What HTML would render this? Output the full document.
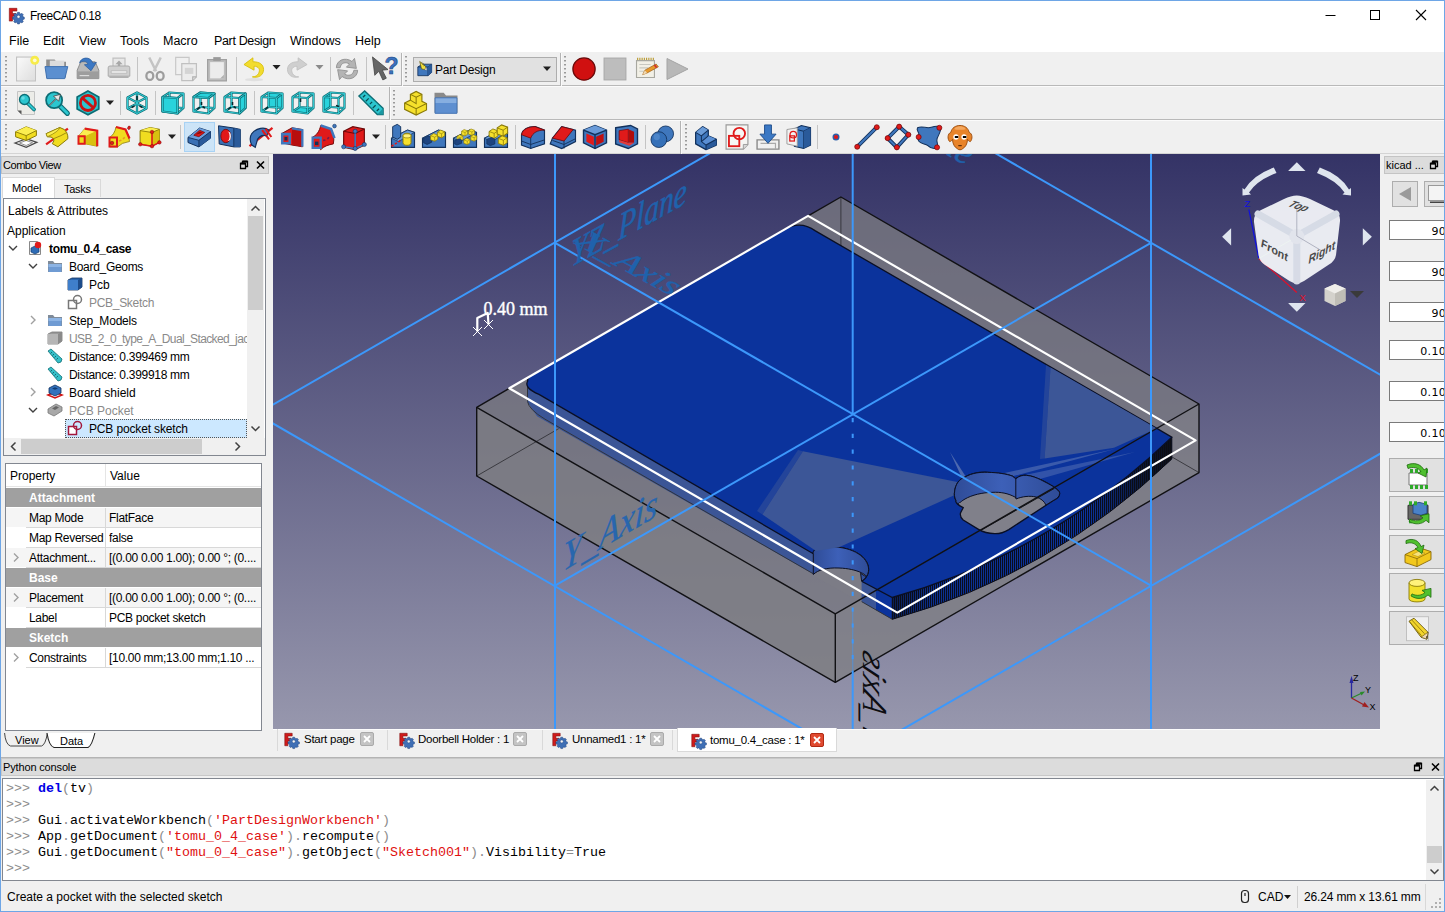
<!DOCTYPE html>
<html><head><meta charset="utf-8"><title>FreeCAD 0.18</title>
<style>
*{box-sizing:border-box;margin:0;padding:0}
html,body{width:1445px;height:912px;overflow:hidden}
body{position:relative;background:#f0f0f0;font-family:"Liberation Sans",sans-serif;font-size:12px;color:#000}
.abs{position:absolute}
.t{position:absolute;white-space:nowrap;line-height:16px}
#titlebar{left:1px;top:1px;width:1443px;height:30px;background:#fff}
#menubar{left:1px;top:31px;width:1443px;height:21px;background:#fff}
.menu{font-size:12.5px;top:33px}
.hl{position:absolute;height:1px;left:1px;width:1443px}
.grip{position:absolute;width:3px;border-left:1px dotted #999;border-right:1px dotted #bbb}
.sep{position:absolute;width:1px;background:#b8b8b8}
svg{position:absolute;overflow:visible}
</style></head>
<body>
<!-- window frame -->
<div class="abs" style="left:0;top:0;width:1445px;height:912px;border:1px solid #6ea6e6;z-index:50;pointer-events:none"></div>
<div class="abs" id="titlebar"></div>
<div class="abs" id="menubar"></div>
<svg style="left:0;top:0" width="1445" height="31"><g transform="translate(8.5,7.5) scale(0.8)"><path d="M1,1h9.500v3.500h-5.500v3h4v3.300h-4v6.200h-4z" fill="#d01b1b" stroke="#7a0c0c" stroke-width=".7"/><g transform="translate(12.500,11.500)"><path d="M-1.200,-5.500h2.400l.4,1.500l1.300,.6l1.400,-.8l1.700,1.700l-.8,1.400l.6,1.300l1.500,.4v2.400l-1.500,.4l-.6,1.300l.8,1.400l-1.700,1.700l-1.400,-.8l-1.300,.6l-.4,1.500h-2.400l-.4,-1.500l-1.300,-.6l-1.400,.8l-1.700,-1.700l.8,-1.400l-.6,-1.300l-1.500,-.4v-2.400l1.500,-.4l.6,-1.300l-.8,-1.400l1.700,-1.700l1.400,.8l1.300,-.6z" fill="#3f6fb5" stroke="#1d3f78" stroke-width=".6"/><circle r="1.900" fill="#f4f4f4" stroke="#1d3f78" stroke-width=".5"/></g></g><path d="M1325.500,15.500h10" stroke="#000"/><rect x="1370.500" y="10.500" width="9" height="9" fill="none" stroke="#000"/><path d="M1416,10l10,10m0,-10l-10,10" stroke="#000" stroke-width="1.100"/></svg>
<div class="t" style="left:30px;top:8px;font-size:12px;letter-spacing:-.5px">FreeCAD 0.18</div>
<!-- MENU -->
<div class="t menu" style="left:9px">File</div>
<div class="t menu" style="left:43px">Edit</div>
<div class="t menu" style="left:79px">View</div>
<div class="t menu" style="left:120px">Tools</div>
<div class="t menu" style="left:163px">Macro</div>
<div class="t menu" style="left:214px;letter-spacing:-.35px">Part Design</div>
<div class="t menu" style="left:290px">Windows</div>
<div class="t menu" style="left:355px">Help</div>
<!-- toolbar separators -->
<div class="hl" style="top:85px;background:#b9b9b9"></div>
<div class="hl" style="top:86px;background:#fbfbfb"></div>
<div class="hl" style="top:119px;background:#b9b9b9"></div>
<div class="hl" style="top:120px;background:#fbfbfb"></div>
<div class="hl" style="top:153px;background:#d4d4d4"></div>
<svg style="left:0;top:52px" width="1445" height="102"><defs><linearGradient id="pg" x1="0" y1="0" x2="1" y2="1"><stop offset="0" stop-color="#fafafa"/><stop offset="1" stop-color="#dedede"/></linearGradient></defs><path d="M6,4v27" stroke="#9a9a9a" stroke-width="2" stroke-dasharray="1.5 2.5"/><g transform="translate(11.0,2.0) scale(1.25)"><path d="M4.5,2.500h15v19h-15z" fill="#efefef" stroke="#c2c2c2"/><path d="M5,3h14v18h-14z" fill="url(#pg)"/><circle cx="19" cy="5" r="3.6" fill="#f7ec4a"/><circle cx="19" cy="5" r="1.5" fill="#fffbd0"/></g><g transform="translate(42.6,2.6) scale(1.2)"><path d="M3,4h7l1.5,2h8v13h-16.500z" fill="#8f8f8f"/><path d="M6,5h12v12h-12z" fill="#dcdcdc"/><path d="M2,10h19l-2.5,10h-15z" fill="#5b8fd0" stroke="#3d6fb0" stroke-width=".8"/></g><g transform="translate(73.6,2.6) scale(1.2)"><path d="M3,13l3,-7h12l3,7v7h-18z" fill="#b9b9b9" stroke="#8a8a8a" stroke-width=".8"/><path d="M3,14h18v6h-18z" fill="#9d9d9d"/><path d="M5,17.500h8" stroke="#dcdcdc"/><path d="M5,7c1,-5 9,-6 11,0l3,-0.500l-4.5,7l-5.5,-5l3,-0.500c-1,-3 -5,-3 -7,-1z" fill="#3b78c4" stroke="#2a5a9a" stroke-width=".6"/></g><g transform="translate(104.6,2.6) scale(1.2)"><path d="M7,3h10v8h-10z" fill="#e8e8e8" stroke="#c0c0c0"/><path d="M12,5l3,3h-2v2h-2v-2h-2z" fill="#a8a8a8"/><path d="M3,11q0,-1.5 1.5,-1.500h15q1.5,0 1.5,1.500v7h-18z" fill="#d0d0d0" stroke="#a8a8a8" stroke-width=".8"/><path d="M5.5,13.500h13v2h-13z" fill="#f4f4f4" stroke="#b0b0b0" stroke-width=".6"/><path d="M4,18h16v1.500h-16z" fill="#b0b0b0"/></g><g transform="translate(141.2,3.2) scale(1.15)"><path d="M7,2l6,12M17,2l-6,12" stroke="#c4c4c4" stroke-width="2.2"/><ellipse cx="7.5" cy="18" rx="3" ry="3.5" fill="none" stroke="#9d9d9d" stroke-width="2"/><ellipse cx="16.5" cy="18" rx="3" ry="3.5" fill="none" stroke="#9d9d9d" stroke-width="2"/></g><g transform="translate(171.4,2.4) scale(1.22)"><path d="M3.5,2.500h11v14h-11z" fill="#f0f0f0" stroke="#c8c8c8"/><path d="M8.5,7.500h12v11l-3,3h-9z" fill="#ececec" stroke="#c0c0c0"/><path d="M11,11h7v5h-7z" fill="#d4d4d4"/><path d="M17.5,21.500v-3h3" fill="none" stroke="#b0b0b0"/></g><g transform="translate(202.0,2.0) scale(1.25)"><path d="M4.5,4.500h15v17h-15z" fill="#bdbdbd" stroke="#a0a0a0"/><path d="M6.5,6.500h11v13h-11z" fill="#ececec"/><path d="M9,2.500h6v3h-6z" fill="#9a9a9a"/><path d="M17.5,19.500l-3,0l3,-3z" fill="#b0b0b0"/></g><g transform="translate(240.6,3.6) scale(1.12)"><path d="M11,2l-8,6l9,5v-3.500c4,0 6,3 4,6.500c-1,2 -3,3 -5.5,3c6,1.5 10,-2 10,-6.500c0,-4.5 -3.5,-7 -9.5,-7z" fill="#f2dc2e" stroke="#d8bf10" stroke-width=".8"/><ellipse cx="12" cy="21.5" rx="8" ry="1.5" fill="#d8d8d8" opacity=".7"/></g><g transform="translate(283.6,3.6) scale(1.12)"><path d="M13,2l8,6l-9,5v-3.500c-4,0 -6,3 -4,6.500c1,2 3,3 5.5,3c-6,1.5 -10,-2 -10,-6.500c0,-4.5 3.5,-7 9.5,-7z" fill="#cfcfcf" stroke="#c0c0c0" stroke-width=".8"/></g><g transform="translate(332.0,2.0) scale(1.25)"><path d="M3.5,11c0,-6 7,-9 12.5,-5l2,-2.500l1.5,8l-8,-1l2.5,-2.500c-3,-2 -7,-1 -7.5,3z" fill="#b4b4b4" stroke="#8f8f8f" stroke-width=".7"/><path d="M20.5,13c0,6 -7,9 -12.5,5l-2,2.500l-1.5,-8l8,1l-2.5,2.500c3,2 7,1 7.5,-3z" fill="#b4b4b4" stroke="#8f8f8f" stroke-width=".7"/></g><g transform="translate(370.2,3.2) scale(1.15)"><path d="M2,1.500l2,16l3.5,-3.500l3.5,7.500l3,-1.500l-3.5,-7l5,-0.500z" fill="#666" stroke="#444" stroke-width=".7"/><text x="12.5" y="16.5" font-family="Liberation Sans,sans-serif" font-size="20" font-weight="bold" fill="#3a72c0" stroke="#1d3f78" stroke-width=".5">?</text></g><path d="M137.5,5v24" stroke="#c4c4c4"/><path d="M236.5,5v24" stroke="#c4c4c4"/><path d="M330.5,5v24" stroke="#c4c4c4"/><path d="M366.5,5v24" stroke="#c4c4c4"/><path d="M272.5,13.0h8l-4,4.500z" fill="#202020"/><path d="M315.5,13.0h8l-4,4.500z" fill="#8a8a8a"/><path d="M401.5,1v33" stroke="#b4b4b4"/><path d="M402.5,1v33" stroke="#fafafa"/><path d="M406,4v27" stroke="#9a9a9a" stroke-width="2" stroke-dasharray="1.5 2.5"/><rect x="413.5" y="5.5" width="143" height="24" fill="#e1e1e1" stroke="#adadad"/><g transform="translate(416,8.5) scale(.92)"><path d="M2,7l5,-3h10v9l-4,3.500h-11z" fill="#3f77bd" stroke="#12315c" stroke-width=".9"/><path d="M2,7h11v9.500M13,7l4,-3" fill="none" stroke="#12315c" stroke-width=".8"/><path d="M13,7l4,-3v9l-4,3.500z" fill="#2a5a9a"/><path d="M4,1l7,6l-1.5,3l-3.5,-1z" fill="#f2e040" stroke="#5a5008" stroke-width=".7"/><path d="M5,3l2,-1M6.5,4.500l2,-1.500M8,6l2,-1.5" stroke="#5a5008" stroke-width=".6"/><path d="M9.5,10l1.5,-3l1,3.500z" fill="#fff" stroke="#555" stroke-width=".4"/></g><text x="435" y="21.5" font-family="Liberation Sans,sans-serif" font-size="12" letter-spacing="-.2">Part Design</text><path d="M543,14.5h8l-4,4.500z" fill="#202020"/><path d="M560.5,1v33" stroke="#b4b4b4"/><path d="M561.5,1v33" stroke="#fafafa"/><path d="M565,4v27" stroke="#9a9a9a" stroke-width="2" stroke-dasharray="1.5 2.5"/><g transform="translate(571.3,4.3) scale(1.06)"><circle cx="12" cy="12" r="10.5" fill="#d01010" stroke="#6a0a0a" stroke-width="1.2"/></g><g transform="translate(602.5,4.5) scale(1.04)"><rect x="1.5" y="1.5" width="21" height="21" fill="#bdbdbd" stroke="#a8a8a8"/></g><g transform="translate(632.6,3.6) scale(1.12)"><path d="M3.5,4.500h16v15h-16z" fill="#f2f0e6" stroke="#a8a8a0"/><path d="M4,3h15" stroke="#b89a30" stroke-width="2" stroke-dasharray="1 1"/><path d="M6,8h10M6,11h8M6,14h6" stroke="#c8c8c0"/><path d="M9,17l2,-4l10,-5.500l2,2.500l-10,5.500z" fill="#e89a2c" stroke="#9a5a10" stroke-width=".6"/><path d="M9,17l2,-4l2,2.500z" fill="#f0d8b0"/><path d="M19.5,8.300l2,2.5" stroke="#d03030" stroke-width="1.5"/></g><g transform="translate(665.0,5.0) scale(1.0)"><path d="M2,1.500l21,10.500l-21,10.500z" fill="#b8b8b8" stroke="#a4a4a4"/></g><path d="M6,38v27" stroke="#9a9a9a" stroke-width="2" stroke-dasharray="1.5 2.5"/><g transform="translate(14.0,39.0) scale(1.0)"><path d="M3.5,.5h17v23h-13l-4,-4z" fill="#ecece8" stroke="#c4c4c4"/><path d="M3.5,19.500h4v4z" fill="#555"/><path d="M13.5,12l6.5,6.5" stroke="#0d6d75" stroke-width="3.8" stroke-linecap="round"/><path d="M13.5,12l6.5,6.5" stroke="#2cc6cf" stroke-width="2" stroke-linecap="round"/><circle cx="10.5" cy="8.5" r="5" fill="#2cc6cf" stroke="#0d6d75" stroke-width="1.3"/><circle cx="9" cy="7" r="1.8" fill="#7fe4ea" opacity=".7"/></g><g transform="translate(43.2,37.2) scale(1.15)"><path d="M14,14l7,7" stroke="#0d6d75" stroke-width="4.5" stroke-linecap="round"/><path d="M14,14l7,7" stroke="#2cc6cf" stroke-width="2.5" stroke-linecap="round"/><circle cx="9.5" cy="9.5" r="7" fill="#2cc6cf" stroke="#0d6d75" stroke-width="1.5"/><path d="M5,14l6,-6l-2,-2l6,-1.500l-1.5,6l-2,-2l-6,6z" fill="#e8e8e8" stroke="#444" stroke-width=".7"/></g><g transform="translate(75.0,38.0) scale(1.08)"><polygon points="12,1 22,6.5 22,17.5 12,23 2,17.5 2,6.5" fill="#2cc6cf" stroke="#0d6d75" stroke-width="1.6"/><circle cx="12" cy="12" r="7" fill="none" stroke="#c81414" stroke-width="2.6"/><path d="M7,7.500l10,9" stroke="#c81414" stroke-width="2.6"/></g><g transform="translate(125.0,39.0) scale(1.0)"><g fill="none" stroke="#0d6d75" stroke-width="2.3" stroke-linejoin="round"><polygon points="12,1.5 21.5,6.5 21.5,17.5 12,22.5 2.5,17.5 2.5,6.5"/><path d="M12,1.5v11l-9.5,5M12,12.500l9.5,5M2.5,6.500l9.5,5l9.5,-5M12,11.500v11"/></g><g fill="none" stroke="#35d0d8" stroke-width="1" stroke-linejoin="round"><polygon points="12,1.5 21.5,6.5 21.5,17.5 12,22.5 2.5,17.5 2.5,6.5"/><path d="M12,1.5v11l-9.5,5M12,12.500l9.5,5M2.5,6.500l9.5,5l9.5,-5M12,11.500v11"/></g><path d="M12,5v4M6.5,16.500l3,-1.500M17.5,16.500l-3,-1.5" stroke="#06282c" stroke-width="1.6"/></g><g transform="translate(161.0,39.0) scale(1.0)"><g fill="none" stroke="#0d6d75" stroke-width="2.2" stroke-linejoin="round"><polygon points="1.5,6 16.5,7 16.5,22.5 1.5,20.5"/><polygon points="8.5,1.5 22.5,2.5 22.5,17 8.5,16"/><path d="M1.5,6L8.5,1.5"/><path d="M16.5,7L22.5,2.5"/><path d="M16.5,22.5L22.5,17"/><path d="M1.5,20.5L8.5,16"/></g><g fill="none" stroke="#35d0d8" stroke-width=".9" stroke-linejoin="round"><polygon points="1.5,6 16.5,7 16.5,22.5 1.5,20.5"/><polygon points="8.5,1.5 22.5,2.5 22.5,17 8.5,16"/><path d="M1.5,6L8.5,1.5"/><path d="M16.5,7L22.5,2.5"/><path d="M16.5,22.5L22.5,17"/><path d="M1.5,20.5L8.5,16"/></g><polygon points="1.5,6 16.5,7 16.5,22.5 1.5,20.5" fill="#29d3dc"/><g fill="none" stroke="#0d6d75" stroke-width="2.2" stroke-linejoin="round"><polygon points="1.5,6 16.5,7 16.5,22.5 1.5,20.5"/></g><g fill="none" stroke="#35d0d8" stroke-width=".9" stroke-linejoin="round"><polygon points="1.5,6 16.5,7 16.5,22.5 1.5,20.5"/></g></g><g transform="translate(192.0,39.0) scale(1.0)"><g fill="none" stroke="#0d6d75" stroke-width="2.2" stroke-linejoin="round"><polygon points="1.5,6 16.5,7 16.5,22.5 1.5,20.5"/><polygon points="8.5,1.5 22.5,2.5 22.5,17 8.5,16"/><path d="M1.5,6L8.5,1.5"/><path d="M16.5,7L22.5,2.5"/><path d="M16.5,22.5L22.5,17"/><path d="M1.5,20.5L8.5,16"/></g><g fill="none" stroke="#35d0d8" stroke-width=".9" stroke-linejoin="round"><polygon points="1.5,6 16.5,7 16.5,22.5 1.5,20.5"/><polygon points="8.5,1.5 22.5,2.5 22.5,17 8.5,16"/><path d="M1.5,6L8.5,1.5"/><path d="M16.5,7L22.5,2.5"/><path d="M16.5,22.5L22.5,17"/><path d="M1.5,20.5L8.5,16"/></g><path d="M9.5,14v-3M5,18.500l3,-2.500M13,17l-2.5,-1.5" stroke="#06282c" stroke-width="1.6"/><path d="M9.5,14l-2,2" stroke="#29d3dc" stroke-width="1"/><polygon points="1.5,6 16.5,7 22.5,2.5 8.5,1.5" fill="#29d3dc"/><g fill="none" stroke="#0d6d75" stroke-width="2.2" stroke-linejoin="round"><polygon points="1.5,6 16.5,7 22.5,2.5 8.5,1.5"/></g><g fill="none" stroke="#35d0d8" stroke-width=".9" stroke-linejoin="round"><polygon points="1.5,6 16.5,7 22.5,2.5 8.5,1.5"/></g></g><g transform="translate(223.0,39.0) scale(1.0)"><g fill="none" stroke="#0d6d75" stroke-width="2.2" stroke-linejoin="round"><polygon points="1.5,6 16.5,7 16.5,22.5 1.5,20.5"/><polygon points="8.5,1.5 22.5,2.5 22.5,17 8.5,16"/><path d="M1.5,6L8.5,1.5"/><path d="M16.5,7L22.5,2.5"/><path d="M16.5,22.5L22.5,17"/><path d="M1.5,20.5L8.5,16"/></g><g fill="none" stroke="#35d0d8" stroke-width=".9" stroke-linejoin="round"><polygon points="1.5,6 16.5,7 16.5,22.5 1.5,20.5"/><polygon points="8.5,1.5 22.5,2.5 22.5,17 8.5,16"/><path d="M1.5,6L8.5,1.5"/><path d="M16.5,7L22.5,2.5"/><path d="M16.5,22.5L22.5,17"/><path d="M1.5,20.5L8.5,16"/></g><path d="M9.5,14v-3M5,18.500l3,-2.500M13,17l-2.5,-1.5" stroke="#06282c" stroke-width="1.6"/><path d="M9.5,14l-2,2" stroke="#29d3dc" stroke-width="1"/><polygon points="16.5,7 22.5,2.5 22.5,17 16.5,22.5" fill="#29d3dc"/><g fill="none" stroke="#0d6d75" stroke-width="2.2" stroke-linejoin="round"><polygon points="16.5,7 22.5,2.5 22.5,17 16.5,22.5"/></g><g fill="none" stroke="#35d0d8" stroke-width=".9" stroke-linejoin="round"><polygon points="16.5,7 22.5,2.5 22.5,17 16.5,22.5"/></g></g><g transform="translate(260.0,39.0) scale(1.0)"><polygon points="8.5,1.5 22.5,2.5 22.5,17 8.5,16" fill="#29d3dc"/><g fill="none" stroke="#0d6d75" stroke-width="2.2" stroke-linejoin="round"><polygon points="1.5,6 16.5,7 16.5,22.5 1.5,20.5"/><polygon points="8.5,1.5 22.5,2.5 22.5,17 8.5,16"/><path d="M1.5,6L8.5,1.5"/><path d="M16.5,7L22.5,2.5"/><path d="M16.5,22.5L22.5,17"/><path d="M1.5,20.5L8.5,16"/></g><g fill="none" stroke="#35d0d8" stroke-width=".9" stroke-linejoin="round"><polygon points="1.5,6 16.5,7 16.5,22.5 1.5,20.5"/><polygon points="8.5,1.5 22.5,2.5 22.5,17 8.5,16"/><path d="M1.5,6L8.5,1.5"/><path d="M16.5,7L22.5,2.5"/><path d="M16.5,22.5L22.5,17"/><path d="M1.5,20.5L8.5,16"/></g><path d="M5,18.500l3,-2.5" stroke="#06282c" stroke-width="1.6"/></g><g transform="translate(291.0,39.0) scale(1.0)"><polygon points="1.5,20.5 16.5,22.5 22.5,17 8.5,16" fill="#29d3dc"/><g fill="none" stroke="#0d6d75" stroke-width="2.2" stroke-linejoin="round"><polygon points="1.5,6 16.5,7 16.5,22.5 1.5,20.5"/><polygon points="8.5,1.5 22.5,2.5 22.5,17 8.5,16"/><path d="M1.5,6L8.5,1.5"/><path d="M16.5,7L22.5,2.5"/><path d="M16.5,22.5L22.5,17"/><path d="M1.5,20.5L8.5,16"/></g><g fill="none" stroke="#35d0d8" stroke-width=".9" stroke-linejoin="round"><polygon points="1.5,6 16.5,7 16.5,22.5 1.5,20.5"/><polygon points="8.5,1.5 22.5,2.5 22.5,17 8.5,16"/><path d="M1.5,6L8.5,1.5"/><path d="M16.5,7L22.5,2.5"/><path d="M16.5,22.5L22.5,17"/><path d="M1.5,20.5L8.5,16"/></g><path d="M9.5,11v-3.5" stroke="#06282c" stroke-width="1.6"/></g><g transform="translate(322.0,39.0) scale(1.0)"><polygon points="1.5,6 8.5,1.5 8.5,16 1.5,20.5" fill="#29d3dc"/><g fill="none" stroke="#0d6d75" stroke-width="2.2" stroke-linejoin="round"><polygon points="1.5,6 16.5,7 16.5,22.5 1.5,20.5"/><polygon points="8.5,1.5 22.5,2.5 22.5,17 8.5,16"/><path d="M1.5,6L8.5,1.5"/><path d="M16.5,7L22.5,2.5"/><path d="M16.5,22.5L22.5,17"/><path d="M1.5,20.5L8.5,16"/></g><g fill="none" stroke="#35d0d8" stroke-width=".9" stroke-linejoin="round"><polygon points="1.5,6 16.5,7 16.5,22.5 1.5,20.5"/><polygon points="8.5,1.5 22.5,2.5 22.5,17 8.5,16"/><path d="M1.5,6L8.5,1.5"/><path d="M16.5,7L22.5,2.5"/><path d="M16.5,22.5L22.5,17"/><path d="M1.5,20.5L8.5,16"/></g><path d="M14,14.500l3,1" stroke="#06282c" stroke-width="1.6"/></g><g transform="translate(357.2,37.2) scale(1.15)"><path d="M1.5,6l5,-4.500l16,15v5.500l-5,0z" fill="#2cc6cf" stroke="#0d6d75" stroke-width="1.2"/><path d="M7,5l-2,2M10,8l-2.5,2.500M13,11l-2,2M16,14l-2.5,2.500M19,17l-2,2" stroke="#0a4a52" stroke-width="1.1"/><path d="M17.5,22l5,-0v-5.5" fill="#1a98a2"/></g><g transform="translate(401.2,37.2) scale(1.15)"><path d="M3,12l5,-2.500v-5l5,-2.500l5,2.500v6l4,2v5.500l-9,4.500l-10,-5z" fill="#f5e02c" stroke="#8a7a08" stroke-width="1"/><path d="M3,12l10,5l9,-4.500M13,17v5.500M8,4.500l5,2.500l5,-2.500M13,7v5.500l-5,-3" fill="none" stroke="#8a7a08" stroke-width=".9"/></g><g transform="translate(432.2,37.2) scale(1.15)"><path d="M2,3h8l2,2.500h10v15h-20z" fill="#8a8a8a"/><path d="M2.5,7.500h19v13.500h-19z" fill="#5e8fd0" stroke="#4474b4" stroke-width=".8"/><path d="M3,8h18v4h-18z" fill="#86aee0"/></g><path d="M106,48.5h8l-4,4.500z" fill="#202020"/><path d="M120.5,39v24" stroke="#c4c4c4"/><path d="M155.5,39v24" stroke="#c4c4c4"/><path d="M254.5,39v24" stroke="#c4c4c4"/><path d="M353.5,39v24" stroke="#c4c4c4"/><path d="M389.5,35v33" stroke="#b4b4b4"/><path d="M390.5,35v33" stroke="#fafafa"/><path d="M394,38v27" stroke="#9a9a9a" stroke-width="2" stroke-dasharray="1.5 2.5"/><path d="M6,72v27" stroke="#9a9a9a" stroke-width="2" stroke-dasharray="1.5 2.5"/><rect x="184.5" y="70.5" width="30" height="29" fill="#cce4f7" stroke="#a8d2f4"/><g transform="translate(14.0,73.0) scale(1.0)"><path d="M1,18l11.2,-4.300l10.6,3.700l-10.6,5z" fill="#f4f4f4" stroke="#4a4a4a" stroke-width="1.3"/><path d="M5.5,18l6.7,-2.500l6.3,2.200l-6.3,2.800z" fill="#fff" stroke="#777" stroke-width=".8"/><path d="M1.6,6.800l10.6,-5l10.2,3.800v5l-10.2,4.900l-10.6,-3.700z" fill="#f0dc20" stroke="#8a7a08" stroke-width="1"/><path d="M1.6,6.800l10.6,-5l10.2,3.800l-10.2,5z" fill="#fbee50"/><path d="M1.6,6.800l10.6,3.800l10.2,-5M12.2,10.600v4.9" fill="none" stroke="#8a7a08" stroke-width=".9"/></g><g transform="translate(45.0,73.0) scale(1.0)"><path d="M1.1,19.300l21.8,-15.6" stroke="#e01a1a" stroke-width="2.2"/><path d="M1.1,8.700l13.7,-6.200q5.5,1.5 6.9,5q1.5,3.5 1.2,6.200l-10,8.100l-5.6,-3.100q2.5,-3 1.3,-5q-2,-2.3 -6.2,-1.900z" fill="#f0dc20" stroke="#8a7a08" stroke-width="1"/><path d="M1.1,8.700l13.7,-6.200q-1,4 -12.4,9.300z" fill="#fbee50" stroke="#8a7a08" stroke-width=".7"/><path d="M8.6,13.700q8,-3 13.1,-6.2" fill="none" stroke="#8a7a08" stroke-width=".8"/></g><g transform="translate(76.0,73.0) scale(1.0)"><path d="M2.5,11.200l6.2,-7.500l12.5,1.900v15.600l-12.5,-2.500l-6.2,0z" fill="#f0dc20" stroke="#8a7a08" stroke-width=".8"/><path d="M8.7,11.200l12.5,-5.600v15.600l-12.5,-2.500z" fill="#d8c010"/><path d="M2.5,11.200l6.2,-7.500l12.5,1.900l-12.5,5.600z" fill="#fbee50"/><path d="M8.7,3.700l12.5,1.900v15.6" fill="none" stroke="#e01a1a" stroke-width="2.2"/><path d="M2.5,11.200h6.200v7.500h-6.200z" fill="#f0dc20" stroke="#e01a1a" stroke-width="2"/></g><g transform="translate(107.0,73.0) scale(1.0)"><path d="M2.5,12.500q5,-3 6.5,-10.500l9.5,2.500q4,6 4,12q-8,1 -12,5.500h-8z" fill="#f0dc20" stroke="#8a7a08" stroke-width=".8"/><path d="M9,2l9.5,2.500l4,9" fill="none" stroke="#e01a1a" stroke-width="2.2"/><path d="M2.5,12.500h7.500v9h-7.500z" fill="#f0dc20" stroke="#e01a1a" stroke-width="2"/><circle cx="5" cy="18" r="1.8" fill="#e01a1a" stroke="#6e0808" stroke-width=".5"/><ellipse cx="22" cy="2.8" rx="1.3" ry="1.8" fill="#e01a1a" stroke="#6e0808" stroke-width=".5" transform="rotate(20 22 2.8)"/><path d="M12,16q4,-1 6.5,-5" fill="none" stroke="#e89820" stroke-width="1.6" stroke-dasharray="2.5 2"/></g><g transform="translate(138.0,73.0) scale(1.0)"><path d="M2.1,5.600l10,-3.100l9.3,1.800v13.100l-7.4,3.800l-11.9,-1.900z" fill="#f0dc20" stroke="#8a7a08" stroke-width="1"/><path d="M2.1,5.600l10,-3.100l9.3,1.800l-7.4,3.200z" fill="#fbee50"/><path d="M14,7.500l7.4,-3.200v13.100l-7.4,3.800z" fill="#d8c010"/><path d="M2.1,5.600l11.9,1.900l7.4,-3.2" fill="none" stroke="#8a7a08" stroke-width=".9"/><path d="M14,7v14.200l7.4,-3.800M14,21.200l-11.9,-1.9" fill="none" stroke="#e01a1a" stroke-width="1.6"/><g fill="#e01a1a" stroke="#6e0808" stroke-width=".4"><circle cx="14" cy="7" r="1.8"/><circle cx="14" cy="21.2" r="1.8"/><circle cx="2.3" cy="19.3" r="1.8"/><circle cx="21.4" cy="17.4" r="1.8"/></g></g><g transform="translate(187.0,73.0) scale(1.0)"><path d="M1,12.400l11.6,-9.400l10.9,3.600v6.600l-11.6,8.700l-10.9,-4.400z" fill="#3a70b4" stroke="#12315c" stroke-width="1"/><path d="M1,12.400l11.6,-9.400l10.9,3.600l-11.6,8.700z" fill="#6a9edc"/><path d="M11.9,15.300l11.6,-8.700v6.600l-11.6,8.700z" fill="#2a5a9a"/><path d="M1,12.400l10.9,2.900l11.6,-8.700M11.9,15.300v6.6" fill="none" stroke="#12315c" stroke-width=".9"/><path d="M6.8,10.300l5.8,-5.100l5.1,2.200l-5.8,4.300z" fill="#e01818" stroke="#6e0808" stroke-width=".7"/><path d="M8.8,9.800l3.8,-3.200l3,1.200z" fill="#8a0a0a"/></g><g transform="translate(218.0,73.0) scale(1.0)"><path d="M.5,.8l15.3,2.200l6.5,1.400v17.500h-6.500l-14.6,-2.900z" fill="#3a70b4" stroke="#12315c" stroke-width="1"/><path d="M15.8,3l6.5,1.400v17.500h-6.500z" fill="#2a5a9a"/><path d="M15.8,3v18.9" stroke="#12315c" stroke-width=".9"/><ellipse cx="7.8" cy="11" rx="5" ry="6.7" fill="#e01818" stroke="#6e0808" stroke-width=".8"/><ellipse cx="10.3" cy="11.3" rx="2.6" ry="4.6" fill="#f6f6f6"/><ellipse cx="9" cy="11.2" rx="2.5" ry="4.8" fill="#e01818"/></g><g transform="translate(247.2,71.2) scale(1.15)"><path d="M2,20l20,-16" stroke="#e01a1a" stroke-width="2"/><path d="M4,9c4,-5 11,-6 15,-3l-2,5c-3,-1 -6,0 -8,3l-2,7l-3,-2c-2,-4 -2,-7 0,-10z" fill="#3f77bd" stroke="#12315c" stroke-width="1"/><path d="M13,6l6,8M16,5l5,7" stroke="#e01a1a" stroke-width="1.8"/><path d="M9,14c2,-3 5,-4 8,-3" fill="none" stroke="#12315c" stroke-width=".8"/></g><g transform="translate(278.2,71.2) scale(1.15)"><path d="M3,9l9,-5l9,1.500v15l-9,-1.500l-9,-2z" fill="#e01a1a" stroke="#6e0808" stroke-width=".8"/><path d="M12,4l9,1.500v15l-9,-1.500z" fill="#b80e0e"/><path d="M12,4.500l9,1.500v14.5" fill="none" stroke="#3f77bd" stroke-width="2"/><path d="M3.5,9.500h6.500v8h-6.500z" fill="#e01a1a" stroke="#3f77bd" stroke-width="2.2"/><path d="M5.5,12h2.500v3h-2.500z" fill="#12315c"/></g><g transform="translate(309.2,71.2) scale(1.15)"><path d="M3,12c3,-1 6,-5 7,-10l9,3c2,4 3,8 2,13c-5,1 -8,2 -11,5z" fill="#e01a1a" stroke="#6e0808" stroke-width=".8"/><path d="M10,2l9,3l3,8" fill="none" stroke="#3f77bd" stroke-width="2.2"/><path d="M3,12.500h7v9h-7z" fill="#e01a1a" stroke="#3f77bd" stroke-width="2"/><path d="M5,16h3v3h-3z" fill="#12315c"/><circle cx="22" cy="2.5" r="1.6" fill="#3f77bd" stroke="#12315c" stroke-width=".5"/><path d="M12,15c3,0 5,-2 6,-4" fill="none" stroke="#7a1a4a" stroke-width="1.5" stroke-dasharray="2 2"/></g><g transform="translate(340.2,71.2) scale(1.15)"><path d="M3,7l8,-4l10,2v14l-8,4l-10,-2z" fill="#e01a1a" stroke="#6e0808" stroke-width="1"/><path d="M3,7l10,2l8,-4M13,9v14" fill="none" stroke="#6e0808" stroke-width=".9"/><path d="M13,7v15l8,-3.500M13,22l-10,-1.5" fill="none" stroke="#3f77bd" stroke-width="1.4"/><g fill="#3f77bd" stroke="#12315c" stroke-width=".5"><circle cx="13" cy="7" r="1.8"/><circle cx="13" cy="22" r="1.8"/><circle cx="3" cy="20.5" r="1.8"/><circle cx="21" cy="18.5" r="1.8"/></g></g><g transform="translate(389.2,71.2) scale(1.15)"><path d="M2,13l14,-7l6,2v13l-20,0z" fill="#3f77bd" stroke="#12315c" stroke-width="1"/><path d="M2,13l14,-7l6,2l-14,8z" fill="#6a9bd8" stroke="#12315c" stroke-width=".6"/><path d="M3,3l4,-2l3,2v9l-3,2l-4,-2z" fill="#3f77bd" stroke="#12315c" stroke-width=".8"/><path d="M12,11c0,-3 7,-3 7,0v6c0,3 -7,3 -7,0z" fill="#f5e02c" stroke="#8a7a08" stroke-width=".8"/><ellipse cx="15.5" cy="11" rx="3.5" ry="1.8" fill="#fff27a" stroke="#8a7a08" stroke-width=".6"/><path d="M2,20l8,-5" stroke="#e01a1a" stroke-width="1.4" stroke-dasharray="2 1.5"/></g><g transform="translate(420.2,71.2) scale(1.15)"><path d="M2,13l14,-7l6,2v13l-20,0z" fill="#3f77bd" stroke="#12315c" stroke-width="1"/><path d="M2,13l14,-7l6,2l-14,8z" fill="#6a9bd8" stroke="#12315c" stroke-width=".6"/><path d="M3,13l4,-2l3,1.500v4l-4,2l-3,-1.500z" fill="#1d4480" stroke="#12315c" stroke-width=".7"/><g transform="translate(9,9) scale(0.9)"><path d="M0,2l3,-2l4,1.500v4l-3,2l-4,-1.500z" fill="#f5e02c" stroke="#8a7a08" stroke-width=".7"/><path d="M0,2l4,1.500l3,-2M4,3.500v4" fill="none" stroke="#8a7a08" stroke-width=".6"/></g><g transform="translate(15,6) scale(0.9)"><path d="M0,2l3,-2l4,1.500v4l-3,2l-4,-1.500z" fill="#f5e02c" stroke="#8a7a08" stroke-width=".7"/><path d="M0,2l4,1.500l3,-2M4,3.500v4" fill="none" stroke="#8a7a08" stroke-width=".6"/></g></g><g transform="translate(451.2,71.2) scale(1.15)"><path d="M2,13l14,-7l6,2v13l-20,0z" fill="#3f77bd" stroke="#12315c" stroke-width="1"/><path d="M2,13l14,-7l6,2l-14,8z" fill="#6a9bd8" stroke="#12315c" stroke-width=".6"/><g transform="translate(5,10) scale(0.75)"><path d="M0,2l3,-2l4,1.500v4l-3,2l-4,-1.500z" fill="#f5e02c" stroke="#8a7a08" stroke-width=".7"/><path d="M0,2l4,1.500l3,-2M4,3.500v4" fill="none" stroke="#8a7a08" stroke-width=".6"/></g><g transform="translate(9,5.5) scale(0.75)"><path d="M0,2l3,-2l4,1.500v4l-3,2l-4,-1.500z" fill="#f5e02c" stroke="#8a7a08" stroke-width=".7"/><path d="M0,2l4,1.500l3,-2M4,3.500v4" fill="none" stroke="#8a7a08" stroke-width=".6"/></g><g transform="translate(15,5) scale(0.75)"><path d="M0,2l3,-2l4,1.500v4l-3,2l-4,-1.500z" fill="#f5e02c" stroke="#8a7a08" stroke-width=".7"/><path d="M0,2l4,1.500l3,-2M4,3.500v4" fill="none" stroke="#8a7a08" stroke-width=".6"/></g><g transform="translate(17,10) scale(0.75)"><path d="M0,2l3,-2l4,1.500v4l-3,2l-4,-1.500z" fill="#f5e02c" stroke="#8a7a08" stroke-width=".7"/><path d="M0,2l4,1.500l3,-2M4,3.500v4" fill="none" stroke="#8a7a08" stroke-width=".6"/></g><g transform="translate(11,13) scale(0.75)"><path d="M0,2l3,-2l4,1.500v4l-3,2l-4,-1.500z" fill="#f5e02c" stroke="#8a7a08" stroke-width=".7"/><path d="M0,2l4,1.500l3,-2M4,3.500v4" fill="none" stroke="#8a7a08" stroke-width=".6"/></g><path d="M3,15l4,-1.500l2,1v3l-4,1.500l-2,-1z" fill="#1d4480" stroke="#12315c" stroke-width=".6"/></g><g transform="translate(482.2,71.2) scale(1.15)"><path d="M2,13l14,-7l6,2v13l-20,0z" fill="#3f77bd" stroke="#12315c" stroke-width="1"/><path d="M2,13l14,-7l6,2l-14,8z" fill="#6a9bd8" stroke="#12315c" stroke-width=".6"/><g transform="translate(6,5) scale(1.1)"><path d="M0,2l3,-2l4,1.500v4l-3,2l-4,-1.500z" fill="#f5e02c" stroke="#8a7a08" stroke-width=".7"/><path d="M0,2l4,1.500l3,-2M4,3.500v4" fill="none" stroke="#8a7a08" stroke-width=".6"/></g><g transform="translate(13,1.5) scale(1.3)"><path d="M0,2l3,-2l4,1.500v4l-3,2l-4,-1.500z" fill="#f5e02c" stroke="#8a7a08" stroke-width=".7"/><path d="M0,2l4,1.500l3,-2M4,3.500v4" fill="none" stroke="#8a7a08" stroke-width=".6"/></g><g transform="translate(14,11) scale(1.1)"><path d="M0,2l3,-2l4,1.500v4l-3,2l-4,-1.500z" fill="#f5e02c" stroke="#8a7a08" stroke-width=".7"/><path d="M0,2l4,1.500l3,-2M4,3.500v4" fill="none" stroke="#8a7a08" stroke-width=".6"/></g><path d="M4,14l4,-1.500l3,1.500v4l-4,1.500l-3,-1.500z" fill="#1d4480" stroke="#12315c" stroke-width=".6"/></g><g transform="translate(519.2,71.2) scale(1.15)"><path d="M2,10c1,-5 6,-7 12,-7l8,3v12l-12,4l-8,-3z" fill="#3f77bd" stroke="#12315c" stroke-width="1"/><path d="M2,10c1,-5 6,-7 12,-7l8,3c-6,0 -10,2 -12,7z" fill="#e01a1a" stroke="#6e0808" stroke-width=".7"/><path d="M10,13v9M2,15.500l8,3l12,-4" fill="none" stroke="#12315c" stroke-width=".8"/></g><g transform="translate(550.2,71.2) scale(1.15)"><path d="M2,13l8,-10l12,3v10l-12,6l-10,-4z" fill="#3f77bd" stroke="#12315c" stroke-width="1"/><path d="M2,13l8,-10l10,2.500l-8,10z" fill="#e01a1a" stroke="#6e0808" stroke-width=".7"/><path d="M12,15.500v6.500M2,15l10,3.500l10,-5" fill="none" stroke="#12315c" stroke-width=".8"/></g><g transform="translate(581.2,71.2) scale(1.15)"><path d="M2,6l10,-4l10,4v11l-10,5l-10,-5z" fill="#3f77bd" stroke="#12315c" stroke-width="1.2"/><path d="M2,6l10,-4l10,4l-10,4z" fill="#6a9bd8"/><path d="M4.5,9l6.5,2.800v7.500l-6.5,-3.200z" fill="#e01a1a"/><path d="M13,11.800l6.5,-2.800v7.100l-6.5,3.200z" fill="#c01010"/><path d="M2,6l10,4l10,-4M12,10v12" fill="none" stroke="#12315c" stroke-width="1.2"/></g><g transform="translate(612.2,71.2) scale(1.15)"><path d="M3,4l13,-2l6,3v13l-8,4l-11,-4z" fill="#3f77bd" stroke="#12315c" stroke-width="1.2"/><path d="M6,6.500l8,-1.300v11.800l-8,-2.500z" fill="#e01a1a" stroke="#6e0808" stroke-width=".6"/><path d="M14,5.200l5,2.300v9.500l-5,0z" fill="#b00c0c"/><path d="M6,14.500l8,2.500h5l-4,2.500l-9,-3z" fill="#e03a3a"/></g><g transform="translate(649.4,72.4) scale(1.05)"><circle cx="15.5" cy="9" r="7.5" fill="#3f77bd" stroke="#12315c" stroke-width=".8"/><circle cx="9" cy="14.5" r="7.5" fill="#3570b8" stroke="#12315c" stroke-width=".8"/><circle cx="7" cy="12" r="3" fill="#5c92d4" opacity=".6"/></g><g transform="translate(692.2,71.2) scale(1.15)"><path d="M3,8l6,-5l5,3v5l7,3v5l-9,4l-9,-5z" fill="#3f77bd" stroke="#12315c" stroke-width="1.1" stroke-linejoin="round"/><path d="M3,8l6,-5l5,3l-6,5z" fill="#6a9bd8"/><path d="M8,16l6,-5l7,3l-9,5z" fill="#5a8fd4"/><path d="M12,19l9,-5v5l-9,4z" fill="#2a5a9a"/><path d="M3,8l5,3l6,-5M8,11v5l4,3l9,-5M12,19v4M8,16l6,-5" fill="none" stroke="#12315c" stroke-width=".9"/></g><g transform="translate(723.2,71.2) scale(1.15)"><path d="M2.5,1.500h19v17l-4,4h-15z" fill="#f6f6f4" stroke="#999"/><path d="M17.5,22.500v-4h4" fill="#d8d8d8" stroke="#999" stroke-width=".8"/><rect x="5" y="11" width="9" height="9" fill="none" stroke="#e01a1a" stroke-width="1.6"/><circle cx="14" cy="9" r="5" fill="none" stroke="#e01a1a" stroke-width="1.6"/></g><g transform="translate(754.2,71.2) scale(1.15)"><path d="M2.5,14.500h19v8h-19z" fill="#f0f0f0" stroke="#888" stroke-width="1.2"/><path d="M5.5,17.500h13v5" fill="none" stroke="#aaa"/><path d="M9,1.500h6v8h4l-7,8l-7,-8h4z" fill="#3b78c4" stroke="#1d4c8a" stroke-width=".8"/></g><g transform="translate(785.2,71.2) scale(1.15)"><path d="M8,5l6,-3l8,2v15l-6,3l-8,-2z" fill="#3f77bd" stroke="#12315c" stroke-width="1"/><path d="M16,7v15M8,5l8,2l6,-3" fill="none" stroke="#12315c" stroke-width=".9"/><path d="M16,7l6,-3v15l-6,3z" fill="#2a5a9a"/><path d="M1.5,5.500l9,-1.500v16l-9,-2z" fill="#f2f2f2" stroke="#999" stroke-width=".8"/><rect x="4" y="11" width="4" height="4.5" fill="none" stroke="#e01a1a" stroke-width="1.1"/><circle cx="7" cy="10" r="2.8" fill="none" stroke="#e01a1a" stroke-width="1.1"/></g><g transform="translate(824.0,73.0) scale(1.0)"><circle cx="12" cy="12" r="2.8" fill="#e01a1a" stroke="#2c5fa8" stroke-width="1.4"/></g><g transform="translate(853.2,71.2) scale(1.15)"><path d="M3,21l18,-18" stroke="#12315c" stroke-width="3.2"/><path d="M3,21l18,-18" stroke="#3f77bd" stroke-width="1.8"/><circle cx="3.5" cy="20.5" r="2.2" fill="#e01a1a" stroke="#6e0808" stroke-width=".6"/><circle cx="20.5" cy="3.5" r="2.2" fill="#e01a1a" stroke="#6e0808" stroke-width=".6"/></g><g transform="translate(884.2,71.2) scale(1.15)"><polygon points="13,3 21,10 11,21 3,13" fill="none" stroke="#12315c" stroke-width="3.4"/><polygon points="13,3 21,10 11,21 3,13" fill="none" stroke="#3f77bd" stroke-width="1.8"/><g fill="#e01a1a" stroke="#6e0808" stroke-width=".6"><circle cx="13" cy="3" r="2.2"/><circle cx="21" cy="10" r="2.2"/><circle cx="11" cy="21" r="2.2"/><circle cx="3" cy="13" r="2.2"/></g></g><g transform="translate(915.2,71.2) scale(1.15)"><path d="M2,4c4,-2 8,1 12,-0.500c3,-1 6,-1.5 8,0c1,3 -2,7 -3,10c-1,3 2,6 0,8c-3,1 -6,0 -8,-2c-2,-2 -6,-1 -8,-4c-2,-3 1,-5 0,-7c-1,-2 -2,-3 -1,-4.500z" fill="#3f77bd" stroke="#12315c" stroke-width=".9"/><g fill="#e01a1a" stroke="#6e0808" stroke-width=".6"><circle cx="21" cy="4" r="2.2"/><circle cx="3" cy="12" r="2.2"/><circle cx="19" cy="21" r="2.2"/></g></g><g transform="translate(946.2,71.2) scale(1.15)"><path d="M4,8c-3,1 -3,6 -1,8c1,0 2,-1 2.5,-2c0,4 2,7 4,8c1,1.5 4,1.5 5,0c2,-1 4,-4 4,-8c.5,1 1.5,2 2.5,2c2,-2 2,-7 -1,-8c-1,-4 -4,-6 -8,-6c-4,0 -7,2 -8,6z" fill="#e8842a" stroke="#9a4a0a" stroke-width=".8"/><path d="M7,5c2,-3 8,-3 10,0c-2,1 -8,1 -10,0z" fill="#f4a860"/><circle cx="8.5" cy="12" r="2.3" fill="#fff"/><circle cx="15.5" cy="12" r="2.3" fill="#fff"/><path d="M7.5,12h3M14.5,12h3" stroke="#000" stroke-width="1.6"/><path d="M10.5,19.500h3" stroke="#5a2a08" stroke-width="1"/></g><path d="M168,82.5h8l-4,4.500z" fill="#202020"/><path d="M372,82.5h8l-4,4.500z" fill="#202020"/><path d="M180.5,73v24" stroke="#c4c4c4"/><path d="M385.5,73v24" stroke="#c4c4c4"/><path d="M515.5,73v24" stroke="#c4c4c4"/><path d="M645.5,73v24" stroke="#c4c4c4"/><path d="M817.5,73v24" stroke="#c4c4c4"/><path d="M680.5,69v33" stroke="#b4b4b4"/><path d="M681.5,69v33" stroke="#fafafa"/><path d="M686,72v27" stroke="#9a9a9a" stroke-width="2" stroke-dasharray="1.5 2.5"/></svg>
<div class="abs" style="left:1px;top:156px;width:268px;height:18px;background:#dcdcdc;border:1px solid #c4c4c4"></div>
<div class="t" style="left:3px;top:157px;font-size:11px;letter-spacing:-.45px">Combo View</div>
<svg style="left:238px;top:159px" width="30" height="12"><path d="M2.5,4.5h5v5h-5z M4.5,4.5v-2h5v5h-2" fill="none" stroke="#000" stroke-width="1.3"/><path d="M2.5,4.5h5" stroke="#000" stroke-width="2"/><path d="M4.5,2.5h5" stroke="#000" stroke-width="2"/><path d="M19,2.5l7,7m0,-7l-7,7" stroke="#000" stroke-width="1.6"/></svg>
<div class="abs" style="left:2px;top:177px;width:53px;height:21px;background:#fff;border:1px solid #d9d9d9;border-bottom:none"></div>
<div class="abs" style="left:54px;top:179px;width:47px;height:18px;background:#f0f0f0;border:1px solid #d9d9d9;border-bottom:none"></div>
<div class="t" style="left:12px;top:180px;font-size:11px;letter-spacing:-.1px">Model</div>
<div class="t" style="left:64px;top:181px;font-size:11px;letter-spacing:-.3px">Tasks</div>
<div class="abs" style="left:3px;top:198px;width:263px;height:258px;background:#fff;border:1px solid #828790"></div>
<div class="abs" style="left:247px;top:199px;width:17px;height:239px;background:#f0f0f0"></div>
<div class="abs" style="left:248px;top:216px;width:15px;height:94px;background:#cdcdcd"></div>
<svg style="left:247px;top:199px" width="17" height="239"><path d="M4.5,11.5l4,-4l4,4" fill="none" stroke="#404040" stroke-width="1.5"/><path d="M4.5,227.5l4,4l4,-4" fill="none" stroke="#404040" stroke-width="1.5"/></svg>
<div class="abs" style="left:4px;top:438px;width:243px;height:17px;background:#f0f0f0"></div>
<div class="abs" style="left:21px;top:439px;width:181px;height:15px;background:#cdcdcd"></div>
<svg style="left:4px;top:438px" width="243" height="17"><path d="M11.5,4.5l-4,4l4,4" fill="none" stroke="#404040" stroke-width="1.5"/><path d="M231.5,4.5l4,4l-4,4" fill="none" stroke="#404040" stroke-width="1.5"/></svg>
<div class="abs" style="left:247px;top:438px;width:18px;height:17px;background:#f0f0f0"></div>
<div class="abs" style="left:65px;top:419px;width:182px;height:19px;background:#cce8ff;border:1px dotted #555"></div>
<div class="t" style="left:8px;top:203px;">Labels &amp; Attributes</div>
<div class="t" style="left:7px;top:223px;">Application</div>
<div class="t" style="left:49px;top:241px;font-weight:bold;letter-spacing:-0.3px">tomu_0.4_case</div>
<div class="t" style="left:69px;top:259px;letter-spacing:-.3px">Board_Geoms</div>
<div class="t" style="left:89px;top:277px;">Pcb</div>
<div class="t" style="left:89px;top:295px;color:#8a8a8a;letter-spacing:-.3px">PCB_Sketch</div>
<div class="t" style="left:69px;top:313px;letter-spacing:-.2px">Step_Models</div>
<div class="t" style="left:69px;top:331px;color:#8a8a8a;width:178px;overflow:hidden;letter-spacing:-.62px">USB_2_0_type_A_Dual_Stacked_jac</div>
<div class="t" style="left:69px;top:349px;letter-spacing:-.3px">Distance: 0.399469 mm</div>
<div class="t" style="left:69px;top:367px;letter-spacing:-.3px">Distance: 0.399918 mm</div>
<div class="t" style="left:69px;top:385px;">Board shield</div>
<div class="t" style="left:69px;top:403px;color:#8a8a8a">PCB Pocket</div>
<div class="t" style="left:89px;top:421px;letter-spacing:-.15px">PCB pocket sketch</div>
<svg style="left:0;top:0" width="270" height="460"><path d="M9,246l4,4l4,-4" fill="none" stroke="#404040" stroke-width="1.4"/><path d="M29,264l4,4l4,-4" fill="none" stroke="#404040" stroke-width="1.4"/><path d="M31,316l4,4l-4,4" fill="none" stroke="#a0a0a0" stroke-width="1.4"/><path d="M31,388l4,4l-4,4" fill="none" stroke="#a0a0a0" stroke-width="1.4"/><path d="M29,408l4,4l4,-4" fill="none" stroke="#404040" stroke-width="1.4"/><g transform="translate(27,240)"><path d="M2.5,1.5h8l3,3v10h-11z" fill="#f4f4f4" stroke="#888"/><path d="M4,8l4,-2l4,2v4l-4,2l-4,-2z" fill="#2d6bb5" stroke="#123d73" stroke-width=".7"/><circle cx="11" cy="5" r="3.2" fill="#e01b1b"/></g><g transform="translate(47,258)"><path d="M1,3h5l1.5,2h7.5v9h-14z" fill="#7f8b99"/><path d="M1.5,6h13v8h-13z" fill="#6f9bd3"/><path d="M1.5,6h13v3h-13z" fill="#8db4e4"/></g><g transform="translate(47,312)"><path d="M1,3h5l1.5,2h7.5v9h-14z" fill="#7f8b99"/><path d="M1.5,6h13v8h-13z" fill="#6f9bd3"/><path d="M1.5,6h13v3h-13z" fill="#8db4e4"/></g><g transform="translate(67,276)"><path d="M1,4l4,-2h10v9l-4,3h-10z" fill="#2c66ad" stroke="#0f2f5c" stroke-width=".8"/><path d="M1,4h10v10h-10z" fill="#3f7fcb"/><path d="M11,4l4,-2v9l-4,3z" fill="#1d4c8a"/></g><g transform="translate(67,294)" fill="none" stroke="#777" stroke-width="1.5"><rect x="1.5" y="6.5" width="8" height="8" fill="#fff"/><circle cx="10.5" cy="5.5" r="4" /></g><g transform="translate(47,330)"><path d="M1,4l4,-2h10v9l-4,3h-10z" fill="#9a9a9a" stroke="#777" stroke-width=".8"/><path d="M1,4h10v10h-10z" fill="#b5b5b5"/><path d="M11,4l4,-2v9l-4,3z" fill="#8a8a8a"/></g><g transform="translate(47,348)"><path d="M1,3l3,-2l11,10l-1,3l-3,1z" fill="#35c0c9" stroke="#0f6e76" stroke-width=".8"/><path d="M5,4l-1.5,1.5M7,6l-1.5,1.5M9,8l-1.5,1.5M11,10l-1.5,1.5" stroke="#0f5560" stroke-width=".8"/></g><g transform="translate(47,366)"><path d="M1,3l3,-2l11,10l-1,3l-3,1z" fill="#35c0c9" stroke="#0f6e76" stroke-width=".8"/><path d="M5,4l-1.5,1.5M7,6l-1.5,1.5M9,8l-1.5,1.5M11,10l-1.5,1.5" stroke="#0f5560" stroke-width=".8"/></g><g transform="translate(47,384)"><path d="M1,11l7,-3l7,3l-7,3z" fill="none" stroke="#d01515" stroke-width="1.6"/><path d="M2,4l6,-3l6,3v5l-6,3l-6,-3z" fill="#3272bd" stroke="#0f2f5c" stroke-width=".8"/><path d="M5,4.5l3,-1.3l3,1.3l-3,1.3z" fill="#123d73"/></g><g transform="translate(47,402)"><path d="M1,7l8,-5l6,3v4l-8,5l-6,-3z" fill="#a8a8a8" stroke="#777" stroke-width=".8"/><path d="M5,6.5l4,-2.5l3,1.5l-4,2.5z" fill="#666"/></g><g transform="translate(67,420)" fill="none" stroke="#a3173c" stroke-width="1.5"><rect x="1.5" y="6.5" width="8" height="8" fill="#fff"/><circle cx="10.5" cy="5.5" r="4"/></g></svg>
<div class="abs" style="left:5px;top:463px;width:257px;height:268px;background:#fff;border:1px solid #828790"></div>
<div class="abs" style="left:6px;top:486px;width:255px;height:1px;background:#e5e5e5"></div>
<div class="abs" style="left:105px;top:464px;width:1px;height:22px;background:#e5e5e5"></div>
<div class="t" style="left:10px;top:468px">Property</div><div class="t" style="left:110px;top:468px">Value</div>
<div class="abs" style="left:6px;top:488px;width:255px;height:19px;background:#a0a0a0"></div>
<div class="t" style="left:29px;top:490px;color:#fff;font-weight:bold">Attachment</div>
<div class="abs" style="left:6px;top:508px;width:255px;height:19px;background:#f5f5f5"></div>
<div class="abs" style="left:26px;top:527px;width:235px;height:1px;background:#d8d8d8"></div>
<div class="abs" style="left:105px;top:508px;width:1px;height:19px;background:#d8d8d8"></div>
<div class="t" style="left:29px;top:510px;width:76px;overflow:hidden;letter-spacing:-.3px">Map Mode</div>
<div class="t" style="left:109px;top:510px;letter-spacing:-.3px;width:151px;overflow:hidden">FlatFace</div>
<div class="abs" style="left:6px;top:528px;width:255px;height:19px;background:#fff"></div>
<div class="abs" style="left:26px;top:547px;width:235px;height:1px;background:#d8d8d8"></div>
<div class="abs" style="left:105px;top:528px;width:1px;height:19px;background:#d8d8d8"></div>
<div class="t" style="left:29px;top:530px;width:76px;overflow:hidden;letter-spacing:-.3px">Map Reversed</div>
<div class="t" style="left:109px;top:530px;letter-spacing:-.3px;width:151px;overflow:hidden">false</div>
<div class="abs" style="left:6px;top:548px;width:255px;height:19px;background:#f5f5f5"></div>
<div class="abs" style="left:26px;top:567px;width:235px;height:1px;background:#d8d8d8"></div>
<div class="abs" style="left:105px;top:548px;width:1px;height:19px;background:#d8d8d8"></div>
<div class="t" style="left:29px;top:550px;width:76px;overflow:hidden;letter-spacing:-.3px">Attachment...</div>
<div class="t" style="left:109px;top:550px;letter-spacing:-.3px;width:151px;overflow:hidden">[(0.00 0.00 1.00); 0.00 °; (0....</div>
<div class="abs" style="left:6px;top:568px;width:255px;height:19px;background:#a0a0a0"></div>
<div class="t" style="left:29px;top:570px;color:#fff;font-weight:bold">Base</div>
<div class="abs" style="left:6px;top:588px;width:255px;height:19px;background:#f5f5f5"></div>
<div class="abs" style="left:26px;top:607px;width:235px;height:1px;background:#d8d8d8"></div>
<div class="abs" style="left:105px;top:588px;width:1px;height:19px;background:#d8d8d8"></div>
<div class="t" style="left:29px;top:590px;width:76px;overflow:hidden;letter-spacing:-.3px">Placement</div>
<div class="t" style="left:109px;top:590px;letter-spacing:-.3px;width:151px;overflow:hidden">[(0.00 0.00 1.00); 0.00 °; (0....</div>
<div class="abs" style="left:6px;top:608px;width:255px;height:19px;background:#fff"></div>
<div class="abs" style="left:26px;top:627px;width:235px;height:1px;background:#d8d8d8"></div>
<div class="abs" style="left:105px;top:608px;width:1px;height:19px;background:#d8d8d8"></div>
<div class="t" style="left:29px;top:610px;width:76px;overflow:hidden;letter-spacing:-.3px">Label</div>
<div class="t" style="left:109px;top:610px;letter-spacing:-.3px;width:151px;overflow:hidden">PCB pocket sketch</div>
<div class="abs" style="left:6px;top:628px;width:255px;height:19px;background:#a0a0a0"></div>
<div class="t" style="left:29px;top:630px;color:#fff;font-weight:bold">Sketch</div>
<div class="abs" style="left:6px;top:648px;width:255px;height:19px;background:#fff"></div>
<div class="abs" style="left:26px;top:667px;width:235px;height:1px;background:#d8d8d8"></div>
<div class="abs" style="left:105px;top:648px;width:1px;height:19px;background:#d8d8d8"></div>
<div class="t" style="left:29px;top:650px;width:76px;overflow:hidden;letter-spacing:-.3px">Constraints</div>
<div class="t" style="left:109px;top:650px;letter-spacing:-.3px;width:151px;overflow:hidden">[10.00 mm;13.00 mm;1.10 ...</div>
<svg style="left:0;top:460px" width="270" height="220"><path d="M14,93.5l4,4l-4,4" fill="none" stroke="#a0a0a0" stroke-width="1.4"/><path d="M14,133.5l4,4l-4,4" fill="none" stroke="#a0a0a0" stroke-width="1.4"/><path d="M14,193.5l4,4l-4,4" fill="none" stroke="#a0a0a0" stroke-width="1.4"/></svg>
<svg style="left:0;top:732px" width="110" height="20"><path d="M4.5,0.5q1,12 6,13.5h31q4,-1 6,-13.5" fill="#f0f0f0" stroke="#444" stroke-width="1"/><path d="M47,1q2,13 7,14.500h34q4,-2 7,-15" fill="#fff" stroke="#222" stroke-width="1.1"/><path d="M4,0.5h258" stroke="#f0f0f0"/></svg>
<div class="t" style="left:15px;top:732px;font-size:11px">View</div><div class="t" style="left:60px;top:733px;font-size:11px">Data</div>
<svg style="left:273px;top:154px" width="1107" height="575" viewBox="273 154 1107 575">
<defs><linearGradient id="bg" x1="0" y1="0" x2="0" y2="1"><stop offset="0" stop-color="#343366"/><stop offset="1" stop-color="#9797ad"/></linearGradient><pattern id="hatch" width="2" height="8" patternUnits="userSpaceOnUse"><rect width="2" height="8" fill="#0b339c"/><rect width="1" height="8" fill="#0a0d1c"/></pattern><linearGradient id="holew" x1="0" y1="0" x2="1" y2="0"><stop offset="0" stop-color="#2f4c97"/><stop offset=".45" stop-color="#3d60b8"/><stop offset="1" stop-color="#2f4c97"/></linearGradient><clipPath id="vc"><rect x="273" y="154" width="1107" height="575"/></clipPath></defs>
<g clip-path="url(#vc)">
<rect x="273" y="154" width="1107" height="575" fill="url(#bg)"/>
<polygon points="840.9,197.0 476.7,407.4 835.3,613.8 1199.0,404.0" fill="rgba(122,122,128,0.78)"/>
<polygon points="476.7,407.4 835.3,613.8 835.3,682.4 476.7,476.0" fill="rgba(126,126,130,0.86)"/>
<polygon points="835.3,613.8 1199.0,404.0 1199.0,472.6 835.3,682.4" fill="rgba(128,128,134,0.84)"/>
<g stroke="#2a2a30" stroke-width="1" fill="none" opacity=".8"><path d="M476.7,476.0 L840.9,265.6 L1199.0,472.6"/><path d="M840.9,197.0 L840.9,265.6"/></g>
<polygon points="527.5,384.5 539.0,394.4 892.3,597.5 892.3,619.3 537.0,416.2 527.5,402.3" fill="#3b5596"/>
<polygon points="876.0,588.2 892.3,597.5 892.3,619.3 876.0,610.0" fill="#0b339c"/>
<path d="M527.5,384.5 L527.5,401.3 Q528.5,409.3 545,419.2 L892.3,619.3" stroke="#30343c" stroke-width="1" fill="none"/>
<path d="M892.3,597.5 Q1052.2,552.2 1171.8,437.2 L1171.8,459.0 Q1052.2,574.0 892.3,619.3 Z" fill="url(#hatch)" stroke="#0a0d1c" stroke-width="1"/>
<clipPath id="wallc"><path d="M892.3,597.5 Q1052.2,552.2 1171.8,437.2 L1171.8,459.0 Q1052.2,574.0 892.3,619.3 Z"/></clipPath><linearGradient id="wallg" gradientUnits="userSpaceOnUse" x1="892" y1="0" x2="1172" y2="0"><stop offset="0" stop-color="#0c0d12" stop-opacity=".55"/><stop offset=".15" stop-color="#0c0d12" stop-opacity=".1"/><stop offset=".7" stop-color="#0c0d12" stop-opacity="0"/><stop offset=".9" stop-color="#0c0d12" stop-opacity=".75"/><stop offset="1" stop-color="#0c0d12" stop-opacity=".95"/></linearGradient><rect x="890" y="430" width="285" height="200" fill="url(#wallg)" clip-path="url(#wallc)"/>
<path d="M533.7,374.2 L785,228.9 Q801,220.5 815.4,230.9 L1156.8,428.4 L1171.8,437.2 Q1052.2,552.2 892.3,597.5 L861.6,581.2 C876,572 868,551 839,547.3 C822,545.5 812,549 813.3,553.7 L539,394.4 Q524,388 527.5,381.5 Q527.5,376 533.7,374.2 Z" fill="#0b339c" stroke="#0a0f24" stroke-width="1.3"/>
<path d="M813.3,553.7 C812,549 822,545.5 839,547.3 C868,551 876,572 861.6,581.2 L861.6,603.0 L813.3,575.5 Z" fill="#7c7c86"/>
<path d="M813.3,553.7 C812,549 822,545.5 839,547.3 C868,551 876,572 861.6,581.2 L860.6,573.2 C872,582 866,569 839,568 C826,567.5 818,570 813.3,574.5 Z" fill="url(#holew)" stroke="#0a0f24" stroke-width="1"/>
<polygon points="802.9,451.3 957.5,482.0 954.8,495.0 839.0,547.3 816.0,551.0 762.4,514.4" fill="#3c5697"/>
<polygon points="1050.5,367.6 1156.8,428.4 1114.0,447.8 1044.6,458.4" fill="#3c5697"/>
<polygon points="1050.5,367.6 1044.6,458.4 1040.0,459.0 1046.0,365.0" fill="#3c5697" opacity=".5"/>
<polygon points="802.9,451.3 762.4,514.4 757.0,511.0 798.0,450.0" fill="#3c5697" opacity=".5"/>
<polygon points="1000.0,474.0 1115.0,449.0 1010.0,477.0" fill="#5a74b5" opacity=".6"/>
<polygon points="1020.0,476.0 1135.0,452.0 1040.0,479.0" fill="#5a74b5" opacity=".5"/>
<polygon points="950.0,452.0 966.0,477.0 962.0,478.0" fill="#6a80b8" opacity=".7"/>
<path d="M954.4,493.7 C955,483 960,479 965,477 C972,473 980,472 987.7,472.3 C998,472.6 1007,474 1012.3,476.1 L1015.8,478.8 C1019,476 1023,475 1026.3,475.3 C1032,475.8 1037,478 1040.4,479.6 C1047,483 1052,485.5 1054.4,487.5 C1058,490 1060,492 1059.6,493.7 C1059.5,496.5 1057,498.5 1054.4,499.8 L1008.8,529.6 C1004,532.5 999,533.9 994.7,533.7 C989,533.4 983,532 978.9,529.6 L963.2,520 C960.5,517.5 960,515 960.5,513 L963.2,507.7 C958,505 955.5,502 956.1,500.7 C954.8,498 954.3,496 954.4,493.7 Z" fill="#80808a" stroke="#0a0f24" stroke-width="1.3"/>
<path d="M954.4,493.7 C955,483 960,479 965,477 C972,473 980,472 987.7,472.3 C998,472.6 1007,474 1012.3,476.1 L1015.8,478.8 C1019,476 1023,475 1026.3,475.3 C1032,475.8 1037,478 1040.4,479.6 C1047,483 1052,485.5 1054.4,487.5 C1058,490 1060,492 1059.6,493.7 C1059.5,496.5 1057,498.5 1054.4,499.8 L1046,505 C1044,501 1041,498.5 1036,497 C1030,495.5 1022,496.5 1016,499 L1015.8,497.5 C1008,493 1000,492 993,492.3 C982,492.5 972,495 965,499 C962,500.5 960,503 959.6,502.5 C958,505 955.5,502 956.1,500.7 C954.8,498 954.3,496 954.4,493.7 Z" fill="url(#holew)" stroke="#0a0f24" stroke-width="1"/>
<path d="M1015.8,478.8 L1015.8,498" stroke="#0a0f24" stroke-width="1"/>
<path d="M980.7,530.5 L1054.4,488.4" stroke="#15171c" stroke-width="1"/>
<g stroke="#111114" stroke-width="1.4" fill="none" stroke-linejoin="round"><path d="M808.1,215.9 L840.9,197.0 L1199.0,404.0 L1199.0,472.6 L835.3,682.4 L476.7,476.0 L476.7,407.4 L509.3,388.3"/><path d="M476.7,407.4 L835.3,613.8 L1199.0,404.0"/><path d="M835.3,613.8 L835.3,682.4"/></g>
<polygon points="509.3,388.3 808.1,215.9 1195.6,440.4 897.3,612.6" fill="none" stroke="#fff" stroke-width="2.2" stroke-linejoin="round"/>
<g stroke="#3c98fb" stroke-width="2" fill="none">
<line x1="555" y1="150" x2="555" y2="735" />
<line x1="1151" y1="150" x2="1151" y2="735" />
<line x1="852.7" y1="150" x2="852.7" y2="414" />
<line x1="852.7" y1="612" x2="852.7" y2="672" stroke-width="1.4" opacity=".45"/>
<line x1="852.7" y1="418" x2="852.7" y2="672" stroke-dasharray="4.2 11.6"/>
<line x1="852.7" y1="672" x2="852.7" y2="735" />
<polygon points="256.7,414.1 852.7,71.1 1448.7,414.1 852.7,758.1"/>
<line x1="555" y1="242.8" x2="1151" y2="585.6" />
<line x1="555" y1="585.6" x2="1151" y2="242.8" />
</g>
<g fill="#1f62ac" stroke="#1f62ac" stroke-width=".5" font-family="Liberation Serif,serif" font-style="italic" font-size="34"><text transform="translate(571,267) rotate(-29) skewX(-30)" font-size="33.5">YZ_Plane</text><text transform="translate(574.2,243.4) rotate(28.5) scale(1,.74) skewX(-12)" font-size="39">X_Axis</text><text transform="translate(562.5,571.5) rotate(-30.5) scale(1,.88) skewX(-30)" font-size="39.5" fill="#2866ae" stroke="#2866ae" stroke-width=".3">Y_Axis</text><text transform="translate(847.6,97.5) rotate(30) skewX(-4)" font-size="34">XZ_Plane</text></g>
<text transform="translate(862.5,743.5) rotate(-90) scale(1,-1) skewX(40)" font-family="Liberation Serif,serif" font-style="italic" font-size="35" fill="#0c0c10">Z_Axis</text>
<text x="483.5" y="315" font-family="Liberation Serif,serif" font-size="18" fill="#fff" stroke="#fff" stroke-width=".35">0.40 mm</text>
<g stroke="#fff" fill="none"><path d="M477.3,331.5 L477.3,318 L487.7,313 L488.5,324.4" stroke-width="2.2" stroke-linejoin="round"/><path d="M473,327 L482,336 M482,327 L473,336 M484,320 L493,329 M493,320 L484,329" stroke-width="1"/></g>
</g>
<g fill="#dfe5ee">
<polygon points="1288.1,170.9 1305.5,170.9 1296.8,162.2"/><polygon points="1288.1,303 1305.5,303 1296.8,311.7"/>
<polygon points="1231.1,228.3 1231.1,245.4 1222.1,236.8"/><polygon points="1362.8,228.3 1362.8,245.4 1371.9,236.8"/>
<path d="M1273.8,167.5 Q1253,175 1244.5,189.5 L1242.5,188 L1242.5,195.5 L1251,194.5 L1249,192.5 Q1257,180.5 1276.5,173 Z"/>
<path d="M1319.8,167.5 Q1340.5,175 1349,189.5 L1351,188 L1351,195.5 L1342.5,194.5 L1344.5,192.5 Q1336.5,180.5 1317,173 Z"/>
</g>
<path d="M1248.8,209.3 L1258.8,258.5" stroke="#1010e0" stroke-width="1.2"/><path d="M1258.8,258.5 L1296.8,292.5" stroke="#e0102a" stroke-width="1.2"/><path d="M1258.8,258.5 L1291,240" stroke="#7fdc7f" stroke-width=".8"/>
<text x="1244.5" y="206.5" font-family="Liberation Sans,sans-serif" font-size="9.5" fill="#1010e0">Z</text><text x="1299.5" y="300.5" font-family="Liberation Sans,sans-serif" font-size="9.5" fill="#e0102a">X</text>
<defs><filter id="blr" x="-10%" y="-10%" width="120%" height="120%"><feGaussianBlur stdDeviation="0.7"/></filter></defs>
<g filter="url(#blr)" opacity=".93">
<path d="M1296.8,195.5 Q1302,195.5 1310,199 L1334,210.5 Q1340.5,214 1340,221 L1336,255 Q1335,261 1329,264.5 L1304,281 Q1296.8,285.5 1289.5,281 L1265,265 Q1259.5,261.5 1258.5,255 L1254,222 Q1253.5,214 1260,210.5 L1284,199 Q1291,195.5 1296.8,195.5 Z" fill="#f6f8fb"/>
<g stroke="#e2e7ef" stroke-width="7" fill="none" stroke-linecap="round"><path d="M1296.8,236 L1296.8,281"/><path d="M1296.8,236 L1258,214"/><path d="M1296.8,236 L1336,214"/></g>
<circle cx="1296.8" cy="236.5" r="7.5" fill="#eef1f6"/>
<g stroke="#b9bcc8" stroke-width="1" fill="none"><path d="M1296.8,236 L1296.8,206"/><path d="M1296.8,236 L1322,251"/></g>
</g>
<g font-family="Liberation Sans,sans-serif" font-style="italic" fill="#4a4a4a" font-size="9.5" font-weight="bold">
<text transform="translate(1287,206) rotate(18) skewX(-30)" font-size="10.5">Top</text>
<text transform="matrix(.87,.5,0,1,1261,246.5)" font-size="12">Front</text>
<text transform="matrix(.87,-.5,0,1,1308.5,264)" font-size="12">Right</text>
</g>
<g><path d="M1324.5,288.5 L1335,284 L1345.5,288.5 L1345.5,301 L1335,306 L1324.5,301 Z" fill="#d4d2cc"/><path d="M1324.5,288.5 L1335,284 L1345.5,288.5 L1335,293.5 Z" fill="#efeeea"/><path d="M1335,293.5 L1345.5,288.5 L1345.5,301 L1335,306 Z" fill="#bfbdb6"/></g>
<path d="M1350,291 L1364,291 L1357,298 Z" fill="#3a3a3a"/>
<g stroke-width="1.3" fill="none"><path d="M1351.5,698 L1351.5,679" stroke="#2828a0"/><path d="M1351.5,698 L1362,693" stroke="#2a8a2a"/><path d="M1351.5,698 L1366,706" stroke="#a02020"/></g>
<path d="M1349.5,683 L1351.5,676 L1353.5,683 Z" fill="#2828a0"/><path d="M1360,692 L1365,691.5 L1361.5,695.5 Z" fill="#2a8a2a"/><path d="M1362,706.5 L1369,707.5 L1364.5,702 Z" fill="#a02020"/>
<g font-family="Liberation Sans,sans-serif" font-size="9" fill="#000"><text x="1353" y="681">Z</text><text x="1365" y="692.5">Y</text><text x="1369.5" y="710">X</text></g>
</svg>
<div class="abs" style="left:273px;top:729px;width:1107px;height:1px;background:#fdfdfd"></div>
<div class="abs" style="left:387px;top:730px;width:1px;height:20px;background:#d9d9d9"></div>
<div class="t" style="left:304px;top:731px;font-size:11.5px;letter-spacing:-.25px">Start page</div>
<div class="abs" style="left:542px;top:730px;width:1px;height:20px;background:#d9d9d9"></div>
<div class="t" style="left:418px;top:731px;font-size:11.5px;letter-spacing:-.25px">Doorbell Holder : 1</div>
<div class="abs" style="left:672px;top:730px;width:1px;height:20px;background:#d9d9d9"></div>
<div class="t" style="left:572px;top:731px;font-size:11.5px;letter-spacing:-.25px">Unnamed1 : 1*</div>
<div class="abs" style="left:677px;top:728px;width:160px;height:24px;background:#fff;border:1px solid #d9d9d9;border-top:none"></div>
<div class="t" style="left:710px;top:732px;font-size:11.5px;letter-spacing:-.25px">tomu_0.4_case : 1*</div>
<svg style="left:0;top:729px" width="1380" height="26"><g transform="translate(284,3.5) scale(0.78)"><path d="M1,1h9.5v3.5h-5.5v3h4v3.300h-4v6.200h-4z" fill="#d01b1b" stroke="#7a0c0c" stroke-width=".7"/><g transform="translate(12.5,11.5)"><path d="M-1.200,-5.5h2.400l.4,1.5l1.300,.6l1.400,-.8l1.700,1.700l-.8,1.400l.6,1.300l1.5,.4v2.400l-1.5,.4l-.6,1.300l.8,1.400l-1.700,1.700l-1.400,-.8l-1.300,.6l-.4,1.5h-2.400l-.4,-1.5l-1.300,-.6l-1.400,.8l-1.700,-1.700l.8,-1.400l-.6,-1.300l-1.5,-.4v-2.400l1.5,-.4l.6,-1.300l-.8,-1.400l1.700,-1.700l1.400,.8l1.300,-.6z" fill="#3f6fb5" stroke="#1d3f78" stroke-width=".6"/><circle r="1.9" fill="#f4f4f4" stroke="#1d3f78" stroke-width=".5"/></g></g><rect x="360.5" y="3.5" width="13" height="13" rx="1.5" fill="#c4c4c4" stroke="#aaa"/><path d="M364,7l6,6m0,-6l-6,6" stroke="#fff" stroke-width="1.8"/><g transform="translate(399,3.5) scale(0.78)"><path d="M1,1h9.5v3.5h-5.5v3h4v3.300h-4v6.200h-4z" fill="#d01b1b" stroke="#7a0c0c" stroke-width=".7"/><g transform="translate(12.5,11.5)"><path d="M-1.200,-5.5h2.400l.4,1.5l1.300,.6l1.400,-.8l1.700,1.700l-.8,1.400l.6,1.300l1.5,.4v2.400l-1.5,.4l-.6,1.300l.8,1.400l-1.700,1.700l-1.400,-.8l-1.300,.6l-.4,1.5h-2.400l-.4,-1.5l-1.300,-.6l-1.400,.8l-1.700,-1.700l.8,-1.400l-.6,-1.300l-1.5,-.4v-2.400l1.5,-.4l.6,-1.300l-.8,-1.400l1.700,-1.700l1.400,.8l1.300,-.6z" fill="#3f6fb5" stroke="#1d3f78" stroke-width=".6"/><circle r="1.9" fill="#f4f4f4" stroke="#1d3f78" stroke-width=".5"/></g></g><rect x="513.5" y="3.5" width="13" height="13" rx="1.5" fill="#c4c4c4" stroke="#aaa"/><path d="M517,7l6,6m0,-6l-6,6" stroke="#fff" stroke-width="1.8"/><g transform="translate(552,3.5) scale(0.78)"><path d="M1,1h9.5v3.5h-5.5v3h4v3.300h-4v6.200h-4z" fill="#d01b1b" stroke="#7a0c0c" stroke-width=".7"/><g transform="translate(12.5,11.5)"><path d="M-1.200,-5.5h2.400l.4,1.5l1.300,.6l1.400,-.8l1.700,1.700l-.8,1.400l.6,1.300l1.5,.4v2.400l-1.5,.4l-.6,1.300l.8,1.400l-1.700,1.700l-1.400,-.8l-1.300,.6l-.4,1.5h-2.400l-.4,-1.5l-1.300,-.6l-1.400,.8l-1.700,-1.700l.8,-1.400l-.6,-1.300l-1.5,-.4v-2.400l1.5,-.4l.6,-1.300l-.8,-1.400l1.700,-1.700l1.400,.8l1.300,-.6z" fill="#3f6fb5" stroke="#1d3f78" stroke-width=".6"/><circle r="1.9" fill="#f4f4f4" stroke="#1d3f78" stroke-width=".5"/></g></g><rect x="650.5" y="3.5" width="13" height="13" rx="1.5" fill="#c4c4c4" stroke="#aaa"/><path d="M654,7l6,6m0,-6l-6,6" stroke="#fff" stroke-width="1.8"/><g transform="translate(691,4.5) scale(0.78)"><path d="M1,1h9.5v3.5h-5.5v3h4v3.300h-4v6.200h-4z" fill="#d01b1b" stroke="#7a0c0c" stroke-width=".7"/><g transform="translate(12.5,11.5)"><path d="M-1.200,-5.5h2.400l.4,1.5l1.300,.6l1.400,-.8l1.700,1.700l-.8,1.400l.6,1.300l1.5,.4v2.400l-1.5,.4l-.6,1.300l.8,1.400l-1.700,1.700l-1.400,-.8l-1.300,.6l-.4,1.5h-2.400l-.4,-1.5l-1.300,-.6l-1.400,.8l-1.700,-1.700l.8,-1.400l-.6,-1.300l-1.5,-.4v-2.400l1.5,-.4l.6,-1.300l-.8,-1.400l1.700,-1.700l1.400,.8l1.300,-.6z" fill="#3f6fb5" stroke="#1d3f78" stroke-width=".6"/><circle r="1.9" fill="#f4f4f4" stroke="#1d3f78" stroke-width=".5"/></g></g><rect x="810.5" y="4.5" width="13" height="13" rx="1.5" fill="#e04a30" stroke="#b02a14"/><path d="M814,8l6,6m0,-6l-6,6" stroke="#fff" stroke-width="1.8"/></svg>
<div class="abs" style="left:277px;top:729px;width:1px;height:22px;background:#d9d9d9"></div>
<div class="abs" style="left:1384px;top:156px;width:61px;height:18px;background:#dcdcdc;border:1px solid #c4c4c4"></div>
<div class="t" style="left:1386px;top:157px;font-size:11px">kicad ...</div>
<svg style="left:1428px;top:159px" width="14" height="12"><path d="M2.5,4.5h5v5h-5z M4.5,4.5v-2h5v5h-2" fill="none" stroke="#000" stroke-width="1.300"/><path d="M2.5,4.5h5M4.5,2.5h5" stroke="#000" stroke-width="2"/></svg>
<div class="abs" style="left:1392px;top:181px;width:26px;height:26px;background:#e1e1e1;border:1px solid #adadad"></div>
<div class="abs" style="left:1424px;top:181px;width:26px;height:26px;background:#e1e1e1;border:1px solid #adadad"></div>
<svg style="left:1392px;top:181px" width="53" height="26"><path d="M19,6v14l-12,-7z" fill="#9a9a9a"/><rect x="36.5" y="4.5" width="16" height="15" fill="#f4f4f4" stroke="#999"/><path d="M38,20.5h15v1.5h-15z" fill="#444"/></svg>
<div class="abs" style="left:1389px;top:220px;width:60px;height:20px;background:#fff;border:1px solid #7a7a7a"></div>
<div class="t" style="left:1402px;top:224px;width:44px;text-align:right;font-family:'DejaVu Sans',sans-serif;font-size:11px;letter-spacing:.3px">90</div>
<div class="abs" style="left:1389px;top:261px;width:60px;height:20px;background:#fff;border:1px solid #7a7a7a"></div>
<div class="t" style="left:1402px;top:265px;width:44px;text-align:right;font-family:'DejaVu Sans',sans-serif;font-size:11px;letter-spacing:.3px">90</div>
<div class="abs" style="left:1389px;top:302px;width:60px;height:20px;background:#fff;border:1px solid #7a7a7a"></div>
<div class="t" style="left:1402px;top:306px;width:44px;text-align:right;font-family:'DejaVu Sans',sans-serif;font-size:11px;letter-spacing:.3px">90</div>
<div class="abs" style="left:1389px;top:340px;width:60px;height:20px;background:#fff;border:1px solid #7a7a7a"></div>
<div class="t" style="left:1402px;top:344px;width:44px;text-align:right;font-family:'DejaVu Sans',sans-serif;font-size:11px;letter-spacing:.3px">0.10</div>
<div class="abs" style="left:1389px;top:381px;width:60px;height:20px;background:#fff;border:1px solid #7a7a7a"></div>
<div class="t" style="left:1402px;top:385px;width:44px;text-align:right;font-family:'DejaVu Sans',sans-serif;font-size:11px;letter-spacing:.3px">0.10</div>
<div class="abs" style="left:1389px;top:422px;width:60px;height:20px;background:#fff;border:1px solid #7a7a7a"></div>
<div class="t" style="left:1402px;top:426px;width:44px;text-align:right;font-family:'DejaVu Sans',sans-serif;font-size:11px;letter-spacing:.3px">0.10</div>
<div class="abs" style="left:1389px;top:458px;width:60px;height:34px;background:#e1e1e1;border:1px solid #adadad"></div>
<div class="abs" style="left:1389px;top:496.3px;width:60px;height:34px;background:#e1e1e1;border:1px solid #adadad"></div>
<div class="abs" style="left:1389px;top:534.6px;width:60px;height:34px;background:#e1e1e1;border:1px solid #adadad"></div>
<div class="abs" style="left:1389px;top:572.9px;width:60px;height:34px;background:#e1e1e1;border:1px solid #adadad"></div>
<div class="abs" style="left:1389px;top:611.1999999999999px;width:60px;height:34px;background:#e1e1e1;border:1px solid #adadad"></div>
<svg style="left:0;top:0" width="1445" height="700"><g transform="translate(1401,459)"><path d="M8,14h18v12h-18z" fill="#fff" stroke="#777"/><g fill="#2faa2a"><rect x="9" y="10" width="3" height="4"/><rect x="14" y="10" width="3" height="4"/><rect x="19" y="10" width="3" height="4"/><rect x="24" y="10" width="3" height="4"/><rect x="9" y="26" width="3" height="4"/><rect x="14" y="26" width="3" height="4"/><rect x="19" y="26" width="3" height="4"/><rect x="24" y="26" width="3" height="4"/></g><path d="M6,6c7,-3 14,-1 17,5l3,-2l-1,9l-8,-4l3,-1.5c-3,-4 -8,-5 -13,-3z" fill="#4fc02f" stroke="#1f6a10" stroke-width=".8"/></g><g transform="translate(1401,497.3)"><path d="M7,8h20v14h-20z" fill="#666" stroke="#333"/><path d="M12,7l6,-2l8,2v9l-6,2l-8,-2z" fill="#4a82c8" stroke="#1d3f78" stroke-width=".8"/><g fill="#2faa2a"><rect x="8" y="4" width="3" height="4"/><rect x="13" y="4" width="3" height="4"/><rect x="23" y="4" width="3" height="4"/><rect x="8" y="22" width="3" height="4"/></g><path d="M8,24c6,4 13,3 17,-1l3,2.5l0,-9l-9,2l3,2c-3,3 -8,4 -13,1.5z" fill="#4fc02f" stroke="#1f6a10" stroke-width=".8"/></g><g transform="translate(1401,535.6)"><path d="M4,19l14,-7l12,4v8l-14,7l-12,-4z" fill="#f2c81c" stroke="#8a6a08" stroke-width=".9"/><path d="M4,19l12,4l14,-7M16,23v8" fill="none" stroke="#8a6a08" stroke-width=".8"/><path d="M11,19l7,-3.5l6,2l-7,3.5z" fill="#f8e27a" stroke="#b8940c" stroke-width=".6"/><path d="M5,5c7,-3 13,0 15,6l3,-1.5l-2,8.5l-7,-5l3,-1c-2,-4 -7,-6 -12,-4z" fill="#4fc02f" stroke="#1f6a10" stroke-width=".8"/></g><g transform="translate(1401,573.9)"><path d="M8,9v16c0,4 16,4 16,0v-16z" fill="#f2e02c" stroke="#8a7a08" stroke-width=".9"/><ellipse cx="16" cy="9" rx="8" ry="3.5" fill="#fff27a" stroke="#8a7a08" stroke-width=".9"/><path d="M10,22c6,4 13,3 17,-1l3,2.5l0,-9l-9,2l3,2c-3,3 -8,4 -13,1.5z" fill="#4fc02f" stroke="#1f6a10" stroke-width=".8"/></g><g transform="translate(1401,612.1999999999999)"><rect x="5.5" y="4.5" width="22" height="24" fill="#f0f0f0" stroke="#c0c0c0"/><path d="M8,9l5,-3l14,14l-1,7l-6,-2z" fill="#f2d42c" stroke="#5a4a08" stroke-width=".8"/><path d="M20,25l6,2l1,-7z" fill="#f0d8b0" stroke="#5a4a08" stroke-width=".6"/><path d="M25,24.5l1,2.5l.5,-3.5z" fill="#222"/><path d="M10.5,7.5l13,14M8.5,9.5l12,14" stroke="#8a7408" stroke-width=".8"/></g></svg>
<div class="abs" style="left:1px;top:757px;width:1443px;height:1px;background:#b4b4b4"></div>
<div class="abs" style="left:1px;top:758px;width:1443px;height:18px;background:#dcdcdc;border:1px solid #c8c8c8"></div>
<div class="t" style="left:3px;top:759px;font-size:11px;letter-spacing:-.15px">Python console</div>
<svg style="left:1412px;top:761px" width="32" height="12"><path d="M2.5,4.5h5v5h-5z M4.5,4.5v-2h5v5h-2" fill="none" stroke="#000" stroke-width="1.300"/><path d="M2.5,4.5h5M4.5,2.5h5" stroke="#000" stroke-width="2"/><path d="M20,2.5l7,7m0,-7l-7,7" stroke="#000" stroke-width="1.600"/></svg>
<div class="abs" style="left:2px;top:778px;width:1442px;height:103px;background:#fff;border:1px solid #828790"></div>
<div class="abs" style="left:1426px;top:780px;width:17px;height:100px;background:#f0f0f0"></div>
<div class="abs" style="left:1427px;top:846px;width:15px;height:17px;background:#cdcdcd"></div>
<svg style="left:1426px;top:780px" width="17" height="100"><path d="M4.5,10.5l4,-4l4,4" fill="none" stroke="#404040" stroke-width="1.5"/><path d="M4.5,89.5l4,4l4,-4" fill="none" stroke="#404040" stroke-width="1.5"/></svg>
<div class="t" style="left:6px;top:780.5px;font-family:'Liberation Mono',monospace;font-size:13.33px;white-space:pre"><span style="color:#8c8c8c">&gt;&gt;&gt; </span><span style="color:#0000e6;font-weight:bold">del</span><span style="color:#8c8c8c">(</span>tv<span style="color:#8c8c8c">)</span></div>
<div class="t" style="left:6px;top:796.5px;font-family:'Liberation Mono',monospace;font-size:13.33px;white-space:pre"><span style="color:#8c8c8c">&gt;&gt;&gt; </span></div>
<div class="t" style="left:6px;top:812.5px;font-family:'Liberation Mono',monospace;font-size:13.33px;white-space:pre"><span style="color:#8c8c8c">&gt;&gt;&gt; </span>Gui<span style="color:#8c8c8c">.</span>activateWorkbench<span style="color:#8c8c8c">(</span><span style="color:#e01010">'PartDesignWorkbench'</span><span style="color:#8c8c8c">)</span></div>
<div class="t" style="left:6px;top:828.5px;font-family:'Liberation Mono',monospace;font-size:13.33px;white-space:pre"><span style="color:#8c8c8c">&gt;&gt;&gt; </span>App<span style="color:#8c8c8c">.</span>getDocument<span style="color:#8c8c8c">(</span><span style="color:#e01010">'tomu_0_4_case'</span><span style="color:#8c8c8c">)</span><span style="color:#8c8c8c">.</span>recompute<span style="color:#8c8c8c">()</span></div>
<div class="t" style="left:6px;top:844.5px;font-family:'Liberation Mono',monospace;font-size:13.33px;white-space:pre"><span style="color:#8c8c8c">&gt;&gt;&gt; </span>Gui<span style="color:#8c8c8c">.</span>getDocument<span style="color:#8c8c8c">(</span><span style="color:#e01010">"tomu_0_4_case"</span><span style="color:#8c8c8c">)</span><span style="color:#8c8c8c">.</span>getObject<span style="color:#8c8c8c">(</span><span style="color:#e01010">"Sketch001"</span><span style="color:#8c8c8c">)</span><span style="color:#8c8c8c">.</span>Visibility<span style="color:#8c8c8c">=</span>True</div>
<div class="t" style="left:6px;top:860.5px;font-family:'Liberation Mono',monospace;font-size:13.33px;white-space:pre"><span style="color:#8c8c8c">&gt;&gt;&gt; </span></div>
<div class="t" style="left:7px;top:889px">Create a pocket with the selected sketch</div>
<svg style="left:1238px;top:886px" width="70" height="22"><rect x="3.5" y="4.5" width="7" height="12" rx="3" fill="none" stroke="#222" stroke-width="1.2"/><path d="M7,7v3" stroke="#222" stroke-width="1.2"/><path d="M46,9h7l-3.5,4z" fill="#111"/><path d="M59.5,0v22" stroke="#d0d0d0"/></svg>
<div class="t" style="left:1258px;top:889px">CAD</div>
<div class="t" style="left:1304px;top:889px;letter-spacing:-.15px">26.24 mm x 13.61 mm</div>
<div class="abs" style="left:1425px;top:884px;width:1px;height:26px;background:#d8d8d8"></div>
<svg style="left:1430px;top:897px" width="14" height="14"><g fill="#b0b0b0"><rect x="9" y="9" width="2" height="2"/><rect x="9" y="5" width="2" height="2"/><rect x="9" y="1" width="2" height="2"/><rect x="5" y="9" width="2" height="2"/><rect x="5" y="5" width="2" height="2"/><rect x="1" y="9" width="2" height="2"/></g></svg>
</body></html>
